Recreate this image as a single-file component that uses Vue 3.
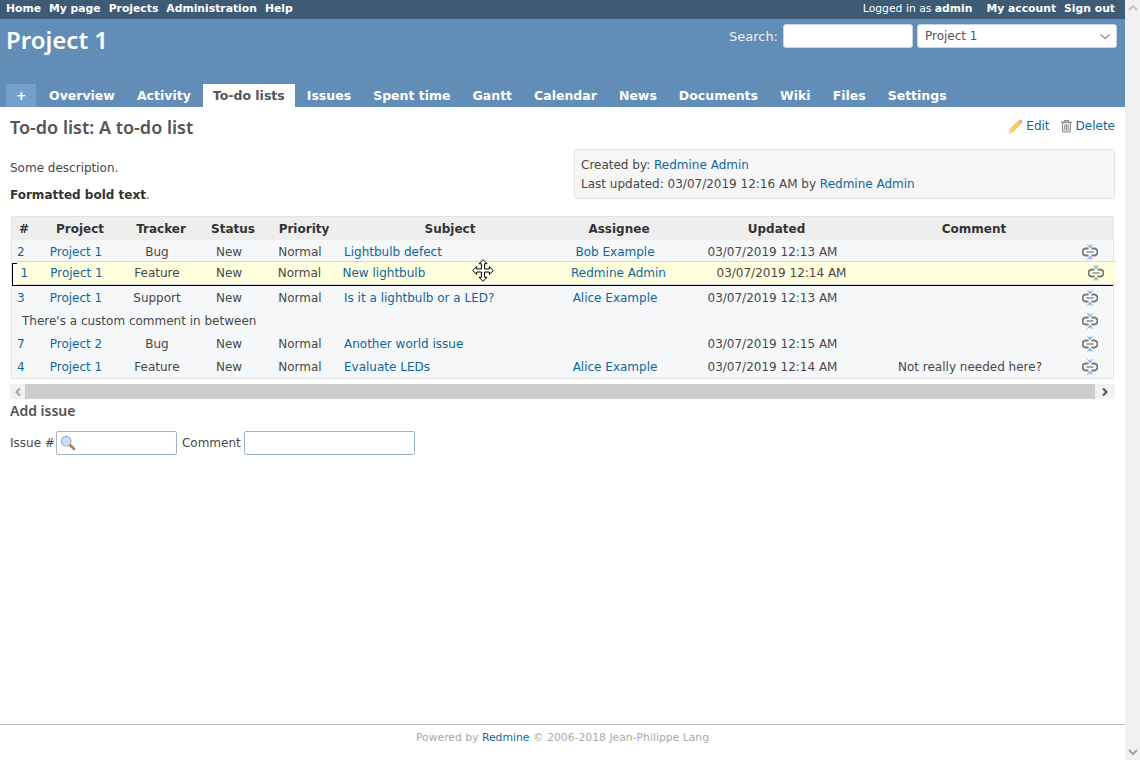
<script setup>
const leftMenu = ["Home", "My page", "Projects", "Administration", "Help"];
const tabs = ["Overview", "Activity", "To-do lists", "Issues", "Spent time", "Gantt", "Calendar", "News", "Documents", "Wiki", "Files", "Settings"];
const columns = ["#", "Project", "Tracker", "Status", "Priority", "Subject", "Assignee", "Updated", "Comment", ""];

const rows = [
  { id: 2, project: "Project 1", tracker: "Bug", subject: "Lightbulb defect", assignee: "Bob Example", updated: "03/07/2019 12:13 AM", comment: "" },
  { placeholder: true },
  { id: 3, project: "Project 1", tracker: "Support", subject: "Is it a lightbulb or a LED?", assignee: "Alice Example", updated: "03/07/2019 12:13 AM", comment: "" },
  { note: "There's a custom comment in between" },
  { id: 7, project: "Project 2", tracker: "Bug", subject: "Another world issue", assignee: "", updated: "03/07/2019 12:15 AM", comment: "" },
  { id: 4, project: "Project 1", tracker: "Feature", subject: "Evaluate LEDs", assignee: "Alice Example", updated: "03/07/2019 12:14 AM", comment: "Not really needed here?" },
];
</script>

<template>
  <div class="page">
    <div class="main">
      <div class="top-menu">
        <div class="menu-links">
          <a v-for="item in leftMenu" :key="item">{{ item }}</a>
        </div>
        <div class="menu-links">
          <span class="logged">Logged in as <b>admin</b></span>
          <a>My account</a>
          <a>Sign out</a>
        </div>
      </div>

      <div class="header">
        <div class="header-top">
          <h1>Project 1</h1>
          <div class="quick-search">
            <label>Search:</label>
            <input class="search-box" />
            <div class="jump-box">
              Project 1
              <svg width="12" height="7" viewBox="0 0 12 7"><path d="M1.5 1.5 6 5.5l4.5-4" fill="none" stroke="#9a9a9a" stroke-width="1.6" /></svg>
            </div>
          </div>
        </div>
        <div class="tabs">
          <a class="tab new-tab">+</a>
          <a v-for="tab in tabs" :key="tab" class="tab" :class="{ selected: tab === 'To-do lists' }">{{ tab }}</a>
        </div>
      </div>

      <div class="content">
        <div class="title-row">
          <h2>To-do list: A to-do list</h2>
          <div class="actions">
            <svg width="15" height="15" viewBox="0 0 15 15">
              <path d="M2 10.5 10.5 2l2.5 2.5L4.5 13 1.5 14z" fill="#f4d35e" stroke="#d9a93c" stroke-width="0.8" />
              <path d="M10.5 2 11.8.8a1 1 0 0 1 1.4 0l1 1a1 1 0 0 1 0 1.4L13 4.5z" fill="#ef9fa6" />
              <path d="M2 11l-.8 3 3-.8z" fill="#f3e3c9" />
            </svg>
            <a class="edit-link">Edit</a>
            <svg width="13" height="14" viewBox="0 0 13 14">
              <path d="M1 3h11M4.5 3V1.5h4V3" fill="none" stroke="#8f8f8f" stroke-width="1.1" />
              <path d="M2.2 3.5h8.6l-.6 9.5H2.8z" fill="#e8e8e8" stroke="#8f8f8f" />
              <path d="M4.8 5.5v6M6.5 5.5v6M8.2 5.5v6" stroke="#8f8f8f" />
            </svg>
            <a>Delete</a>
          </div>
        </div>

        <div class="details">
          <div class="description">
            <p>Some description.</p>
            <p><b>Formatted bold text</b>.</p>
          </div>
          <div class="info-box">
            <div>Created by: <a>Redmine Admin</a></div>
            <div>Last updated: 03/07/2019 12:16 AM by <a>Redmine Admin</a></div>
          </div>
        </div>

        <div class="table-wrap">
          <table class="list">
            <colgroup>
              <col style="width: 24px" /><col style="width: 88px" /><col style="width: 74px" /><col style="width: 70px" /><col style="width: 72px" />
              <col style="width: 220px" /><col style="width: 118px" /><col style="width: 197px" /><col style="width: 198px" /><col style="width: 40px" />
            </colgroup>
            <thead>
              <tr><th v-for="col in columns" :key="col">{{ col }}</th></tr>
            </thead>
            <tbody>
              <template v-for="(row, i) in rows" :key="i">
                <tr v-if="row.placeholder" class="placeholder"><td colspan="10"></td></tr>
                <tr v-else-if="row.note" class="odd">
                  <td colspan="9" class="note">{{ row.note }}</td>
                  <td class="handle">
                    <svg width="16" height="16" viewBox="0 0 16 16"><use href="#link-break" /></svg>
                  </td>
                </tr>
                <tr v-else :class="{ odd: i % 2 === 0 || i === 5 }">
                  <td class="num"><a>{{ row.id }}</a></td>
                  <td class="mid"><a>{{ row.project }}</a></td>
                  <td class="mid">{{ row.tracker }}</td>
                  <td class="mid">New</td>
                  <td class="mid">Normal</td>
                  <td class="subject"><a>{{ row.subject }}</a></td>
                  <td class="mid"><a>{{ row.assignee }}</a></td>
                  <td class="mid">{{ row.updated }}</td>
                  <td class="mid">{{ row.comment }}</td>
                  <td class="handle">
                    <svg width="16" height="16" viewBox="0 0 16 16"><use href="#link-break" /></svg>
                  </td>
                </tr>
              </template>
            </tbody>
          </table>

          <div class="drag-row">
            <span class="d-num"><a>1</a></span>
            <span><a>Project 1</a></span>
            <span>Feature</span>
            <span>New</span>
            <span>Normal</span>
            <span class="d-subject"><a>New lightbulb</a></span>
            <span><a>Redmine Admin</a></span>
            <span>03/07/2019 12:14 AM</span>
            <span></span>
            <span class="d-handle"><svg width="16" height="16" viewBox="0 0 16 16"><use href="#link-break" /></svg></span>
          </div>

          <svg class="move-cursor" width="22" height="23" viewBox="0 0 22 23">
            <path d="M11 .7 15 4.7H12.6V10H17.3V7.6L21.3 11.5 17.3 15.4V13H12.6V18.3H15L11 22.3 7 18.3H9.4V13H4.7V15.4L.7 11.5 4.7 7.6V10H9.4V4.7H7Z" fill="#fff" stroke="#000" />
          </svg>
        </div>

        <div class="hscroll">
          <span class="hbtn">
            <svg width="8" height="10" viewBox="0 0 8 10"><path d="M6 1.5 2.5 5 6 8.5" fill="none" stroke="#a3a3a3" stroke-width="2" /></svg>
          </span>
          <span class="hthumb"></span>
          <span class="hbtn right">
            <svg width="8" height="10" viewBox="0 0 8 10"><path d="M2 1.5 5.5 5 2 8.5" fill="none" stroke="#505050" stroke-width="2" /></svg>
          </span>
        </div>

        <h3>Add issue</h3>
        <div class="add-form">
          <label>Issue #</label>
          <div class="field issue-field">
            <svg width="16" height="16" viewBox="0 0 16 16">
              <path d="M9.5 9.5 14 14" stroke="#b9794a" stroke-width="2.6" stroke-linecap="round" />
              <circle cx="6.2" cy="6.2" r="4.8" fill="#cfe2f5" stroke="#8fb0d2" stroke-width="1.2" />
            </svg>
          </div>
          <label class="comment-label">Comment</label>
          <div class="field comment-field"></div>
        </div>
      </div>

      <div class="footer">Powered by <a>Redmine</a> © 2006-2018 Jean-Philippe Lang</div>
    </div>

    <div class="vscroll">
      <svg width="10" height="8" viewBox="0 0 10 8"><path d="M1 6 5 2l4 4" fill="none" stroke="#c4c4c4" stroke-width="2" /></svg>
      <svg width="10" height="8" viewBox="0 0 10 8"><path d="M1 2l4 4 4-4" fill="none" stroke="#a3a3a3" stroke-width="2" /></svg>
    </div>

    <svg width="0" height="0" class="defs">
      <defs>
        <g id="link-break">
          <path d="M6.5 4.5H4a3.5 3.5 0 0 0 0 7h2.5M9.5 4.5H12a3.500 3.5 0 0 1 0 7H9.500" fill="none" stroke="#7a7a7a" stroke-width="2" />
          <path d="M4.500 8h4M7.500 8h4" fill="none" stroke="#8d8d8d" stroke-width="1.300" />
          <path d="M5.500 .5 8 3.500 10.500 .5M8 .5V3.500M5.500 15.500 8 12.500 10.500 15.500M8 12.500V15.500" fill="none" stroke="#6f9fe6" stroke-width="1" />
        </g>
      </defs>
    </svg>
  </div>
</template>

<style>
html, body {
  margin: 0;
  height: 760px;
  overflow: hidden;
}
</style>

<style scoped>
.page {
  display: flex;
  height: 760px;
  font-family: "DejaVu Sans", Verdana, sans-serif;
  font-size: 12px;
  color: #484848;
  background: #fff;
}

.main {
  flex: 1;
  min-width: 0;
  display: flex;
  flex-direction: column;
}

a {
  color: #169;
  text-decoration: none;
}

.defs {
  position: absolute;
}

.top-menu {
  display: flex;
  justify-content: space-between;
  height: 19px;
  padding: 0 10px 0 6px;
  background: #3e5b76;
  color: #fff;
  font-size: 10.8px;
  line-height: 17px;
}

.menu-links {
  display: flex;
  gap: 8px;
}

.menu-links a {
  color: #fff;
  font-weight: bold;
}

.logged {
  margin-right: 6px;
}

.header {
  height: 88px;
  display: flex;
  flex-direction: column;
  background: #628db6;
  color: #f8f8f8;
}

.header-top {
  display: flex;
  justify-content: space-between;
  padding: 5px 8px 0 6px;
}

h1 {
  margin: 0;
  font-family: "Noto Sans", sans-serif;
  font-size: 24px;
  font-weight: 600;
  line-height: 32px;
  color: #fff;
}

.quick-search {
  display: flex;
  align-items: center;
  height: 24px;
  margin-top: 0;
}

.quick-search label {
  margin-right: 5px;
  font-size: 13px;
  color: #eef2f6;
}

.search-box {
  box-sizing: border-box;
  width: 130px;
  height: 24px;
  margin: 0 4px 0 0;
  padding: 0;
  border: 1px solid #ccd5de;
  border-radius: 3px;
  background: #fff;
}

.jump-box {
  box-sizing: border-box;
  display: flex;
  align-items: center;
  justify-content: space-between;
  width: 200px;
  height: 24px;
  padding: 0 5px 0 7px;
  border: 1px solid #ccd5de;
  border-radius: 3px;
  background: #fff;
  color: #555;
}

.tabs {
  display: flex;
  margin-top: auto;
  padding-left: 6px;
}

.tab {
  height: 23px;
  padding: 0 10px;
  margin-right: 2px;
  line-height: 24px;
  font-weight: bold;
  color: #fff;
  font-size: 12.500px;
}

.new-tab {
  width: 30px;
  box-sizing: border-box;
  margin-right: 3px;
  background: #759fcf;
  text-align: center;
}

.tab.selected {
  background: #fff;
  color: #555;
}

.content {
  padding: 0 10px;
}

.title-row {
  display: flex;
  justify-content: space-between;
  height: 42px;
}

h2 {
  margin: 0;
  padding-top: 7px;
  font-family: "Noto Sans", sans-serif;
  font-size: 18px;
  font-weight: 600;
  line-height: 26px;
  color: #555;
}

.actions {
  display: flex;
  align-items: center;
  height: 38px;
  margin-right: 0;
}

.actions svg {
  margin-right: 3px;
}

.edit-link {
  margin-right: 10px;
}

.details {
  display: flex;
  justify-content: space-between;
  height: 67px;
}

.description p {
  margin: 0 0 12px;
  line-height: 15px;
}

.description {
  padding-top: 12px;
}

.description b {
  color: #333;
}

.info-box {
  box-sizing: border-box;
  width: 541px;
  height: 50px;
  padding: 6px;
  border: 1px solid #e4e4e4;
  border-radius: 3px;
  background: #f6f6f6;
  line-height: 18.500px;
}

.table-wrap {
  position: relative;
  margin-left: 1px;
  width: 1103px;
}

.list {
  box-sizing: border-box;
  width: 1103px;
  table-layout: fixed;
  border-collapse: separate;
  border-spacing: 0;
  border: 1px solid #e4e4e4;
}

.list th {
  height: 23px;
  padding: 0;
  background: #eee;
  font-weight: bold;
  color: #333;
  text-align: center;
}

.list td {
  box-sizing: border-box;
  height: 23px;
  padding: 0;
  white-space: nowrap;
  overflow: hidden;
}

.odd td {
  background: #f6f7f8;
}

.list td.mid {
  text-align: center;
  padding-right: 8px;
}

.list td.num {
  padding-left: 5px;
}

.list td.subject {
  padding-left: 4px;
}

.list td.note {
  padding-left: 10px;
}

.list td.handle {
  padding-left: 9px;
}

.handle svg {
  display: block;
}

.placeholder td {
  border-top: 1px solid #000;
  border-bottom: 1px solid #000;
  border-left: 1px solid #000;
}

.drag-row {
  position: absolute;
  left: 5.500px;
  top: 44.500px;
  box-sizing: border-box;
  display: grid;
  grid-template-columns: 19px 82px 79px 65px 76px 210px 142px 184px 203px 39px;
  align-items: center;
  width: 1099px;
  height: 24px;
  border-top: 1px solid #d7d7d7;
  border-bottom: 1px solid #d7d7d7;
  background: #ffd;
  white-space: nowrap;
  text-align: center;
}

.d-num {
  padding-left: 4px;
  text-align: left;
}

.d-subject {
  padding-left: 5px;
  text-align: left;
}

.d-handle {
  display: flex;
  justify-content: center;
}

.move-cursor {
  position: absolute;
  left: 460.500px;
  top: 42.500px;
}

.hscroll {
  display: flex;
  align-items: center;
  width: 1105px;
  height: 15px;
  margin-top: 5px;
  background: #f1f1f1;
}

.hbtn {
  display: flex;
  align-items: center;
  justify-content: center;
  flex: 0 0 15px;
  height: 15px;
}

.hbtn.right {
  flex-basis: 20px;
}

.hthumb {
  flex: 1;
  height: 15px;
  background: #cdcdcd;
}

h3 {
  margin: 0;
  height: 32px;
  font-family: "Noto Sans", sans-serif;
  font-size: 14px;
  font-weight: 600;
  line-height: 23px;
  color: #555;
}

.add-form {
  display: flex;
  align-items: center;
  height: 24px;
}

.field {
  box-sizing: border-box;
  height: 24px;
  border: 1px solid #a0b4c8;
  border-radius: 2px;
  background: #fff;
}

.issue-field {
  width: 121px;
  margin-left: 1px;
  padding: 3px;
}

.issue-field svg {
  display: block;
}

.comment-label {
  margin: 0 3px 0 5px;
}

.comment-field {
  width: 171px;
}

.footer {
  margin-top: auto;
  height: 36px;
  box-sizing: border-box;
  border-top: 1px solid #bbb;
  padding-top: 5px;
  text-align: center;
  font-size: 10.800px;
  line-height: 16px;
  color: #aaa;
}

.vscroll {
  flex: 0 0 15px;
  display: flex;
  flex-direction: column;
  justify-content: space-between;
  align-items: center;
  padding: 4px 0;
  box-sizing: border-box;
  background: #f1f1f1;
}
</style>
